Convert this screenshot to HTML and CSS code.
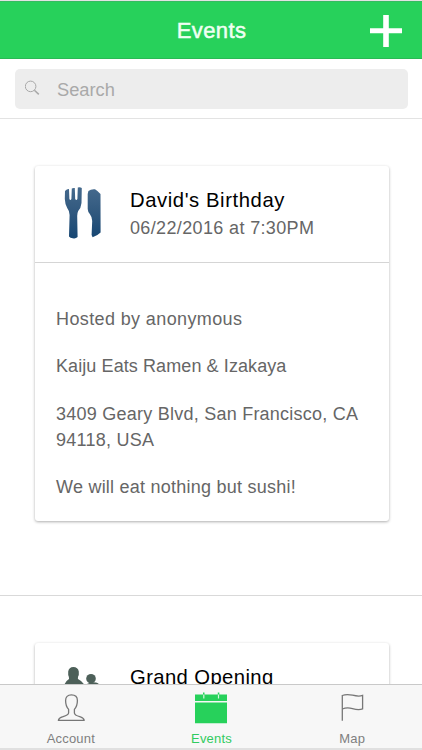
FILE: index.html
```html
<!DOCTYPE html>
<html lang="en">
<head>
<meta charset="utf-8">
<title>Events</title>
<link rel="stylesheet" href="styles.css">
</head>
<body>
<div class="app">
  <header class="header">
    <span></span>
    <h1>Events</h1>
    <svg class="plus" width="32" height="32" viewBox="0 0 32 32"><path d="M13.2 0h5.6v13.2H32v5H18.8V32h-5.6V18.2H0v-5h13.2z" fill="#fff"/></svg>
  </header>
  <div class="searchbar">
    <div class="search">
      <svg width="16" height="16" viewBox="0 0 16 16" fill="none" stroke="#a8a8a8"><circle cx="5.6" cy="6.4" r="5.3"/><path d="M9.4 10.2l4.4 4.2" stroke-width="1.5"/></svg>
      <span>Search</span>
    </div>
  </div>
  <main class="list">
    <section class="item">
      <article class="card">
        <div class="card-head">
          <svg class="thumb" width="40" height="52" viewBox="0 0 40 52">
            <defs><linearGradient id="blue" x1="0" y1="0" x2="0" y2="1"><stop offset="0" stop-color="#44698c"/><stop offset=".5" stop-color="#30587e"/><stop offset="1" stop-color="#174773"/></linearGradient></defs>
            <path fill="url(#blue)" d="M1 4Q3 1.8 5 2L5.4 12Q6.4 14 7.4 12L7.8 1.5Q9 .7 10.8 1L11.2 12Q12.4 14 13.4 12L13.8 .5Q16 -.3 17.8 1L17.5 16Q17 21 14.2 24Q13.2 26 13.2 29L13.6 50Q11.5 52 9 51.3Q6.5 51.5 5 49.5L5.6 28Q5.6 24 3.2 21Q1 17 .8 12Z"/>
            <path fill="url(#blue)" d="M24.4 4Q27 1.8 31 2.2Q34 4 36.5 7L36.6 45.5Q33 49 28.6 50.3L27.6 48L28.2 34Q28.2 30 25.8 27Q23.9 25 23.7 22L23.7 7Z"/>
          </svg>
          <div>
            <h2 class="wide">David's Birthday</h2>
            <p class="date">06/22/2016 at 7:30PM</p>
          </div>
        </div>
        <div class="card-body">
          <p class="host">Hosted by anonymous</p>
          <p class="venue">Kaiju Eats Ramen &amp; Izakaya</p>
          <p>3409 Geary Blvd, San Francisco, CA<br>94118, USA</p>
          <p>We will eat nothing but sushi!</p>
        </div>
      </article>
    </section>
    <section class="item">
      <article class="card">
        <div class="card-head">
          <svg class="thumb" width="40" height="52" viewBox="0 -3 40 52" fill="#4d6059"><path d="M0 19Q1 14.5 5 12Q5.2 10 4.2 8V4.5Q5 .2 9.3 0Q14 0 14.8 4.5V8Q13.6 10 14 12Q18 14 20.5 18V24H0z"/><circle cx="27" cy="11.7" r="4.8"/><path d="M22 17.5Q27 14.5 32 15.6Q35 16 37 20H22z"/></svg>
          <div><h2>Grand Opening</h2></div>
        </div>
      </article>
    </section>
  </main>
  <nav class="tabs">
    <a class="tab">
      <svg width="28" height="32" viewBox="0 0 28 32" fill="none" stroke="#777" stroke-width="1.3" stroke-linejoin="round"><path d="M11.6 17.4C9.3 15 8.6 12 8.6 8.5C8.6 5 10.6 2.8 14.4 2.8S20.4 5 20.4 8.5C20.4 12 19.5 15 17.4 17.4V21C17.6 23.4 20.5 24 23.4 24.8C26 25.6 27 26.6 27.2 28.4H1.4C1.6 26.6 2.6 25.6 5.2 24.8C8.1 24 11.4 23.4 11.6 21z"/></svg>
      <span>Account</span>
    </a>
    <a class="tab active">
      <svg width="32" height="32" viewBox="0 0 32 32"><path fill="#27d15b" d="M0 2.5h8V.5h1.5v2h13.3v-2h1.5v2H32V9H0zM0 10.5h32v20.7H0z"/><path d="M8.8 2.5v4M23.5 2.5v4" stroke="#d8f5e0" stroke-width="1.2"/></svg>
      <span>Events</span>
    </a>
    <a class="tab">
      <svg width="24" height="32" viewBox="0 0 24 32" fill="none" stroke="#777" stroke-width="1.3"><path d="M2.3 28.8V3.5C6 2 9.5 2.5 12.5 3.2S19.5 4.6 22.6 3.4V16.8C19.5 18.2 16 17.6 12.5 16.6S6 15.4 2.3 17"/></svg>
      <span>Map</span>
    </a>
  </nav>
</div>
</body>
</html>
```
FILE: styles.css
```css
* { box-sizing: border-box; }
body, h1, h2, p { margin: 0; font-weight: 400; }
body { font-family: "Liberation Sans", Arial, sans-serif; background: #fff; color: #000; }
svg { display: block; flex: none; }
.app {
  height: 750px;
  display: flex;
  flex-direction: column;
  overflow: hidden;
  border-top: 1px solid #e3e3e3;
  border-bottom: 2px solid #e0e0e0;
}
.header {
  height: 58px;
  flex: none;
  display: grid;
  grid-template-columns: 1fr auto 1fr;
  align-items: center;
  padding: 0 20px;
  background: #27d15b;
  border-top: 1px solid #36bb61;
  border-bottom: 1px solid #29b955;
}
.header h1 { padding: 2px 0 0 1px; color: #effff3; font-size: 22px; line-height: 54px; -webkit-text-stroke: .5px #effff3; letter-spacing: .4px; }
.plus { justify-self: end; margin-top: 1px; }
.searchbar { height: 60px; flex: none; padding: 10px 14px 9px 15px; border-bottom: 1px solid #e3e3e3; }
.search {
  height: 40px;
  display: flex;
  align-items: center;
  padding-left: 10px;
  gap: 16px;
  border-radius: 5px;
  background: #ededed;
  color: #a9a9a9;
  font-size: 18.3px;
}
.search svg { margin-top: -2px; }
.search span { padding-top: 2px; }
.list { flex: 1; min-height: 0; overflow: hidden; }
.item { padding: 47px 33px 74px 35px; border-bottom: 1px solid #d9d9d9; }
.card { border-radius: 3px; background: #fff; box-shadow: 0 1px 3px rgba(0, 0, 0, .32); }
.card-head { height: 97px; display: flex; gap: 26px; padding: 21px 0 0 29px; border-bottom: 1px solid #d5d5d5; }
.card-head h2 { font-size: 20.25px; line-height: 26px; letter-spacing: .4px; }
.card-head h2.wide { letter-spacing: .58px; }
.date { font-size: 18px; line-height: 30px; color: #666; letter-spacing: .36px; }
.card-body { height: 258px; padding: 43px 21px 0; display: flex; flex-direction: column; gap: 21px; color: #666; font-size: 18px; line-height: 26.3px; letter-spacing: .24px; }
.host { letter-spacing: .38px; }
.venue { letter-spacing: .09px; }
.tabs {
  height: 64px;
  flex: none;
  display: grid;
  grid-template-columns: repeat(3, 1fr);
  background: #f7f7f7;
  border-top: 1px solid #c9c9c9;
}
.tab { display: flex; flex-direction: column; align-items: center; padding: 7px 0 0 1px; color: #7f7f7f; font-size: 13px; letter-spacing: .2px; line-height: 15px; }
.tab span { margin-top: 7px; }
.active { color: #31cb60; }
```
